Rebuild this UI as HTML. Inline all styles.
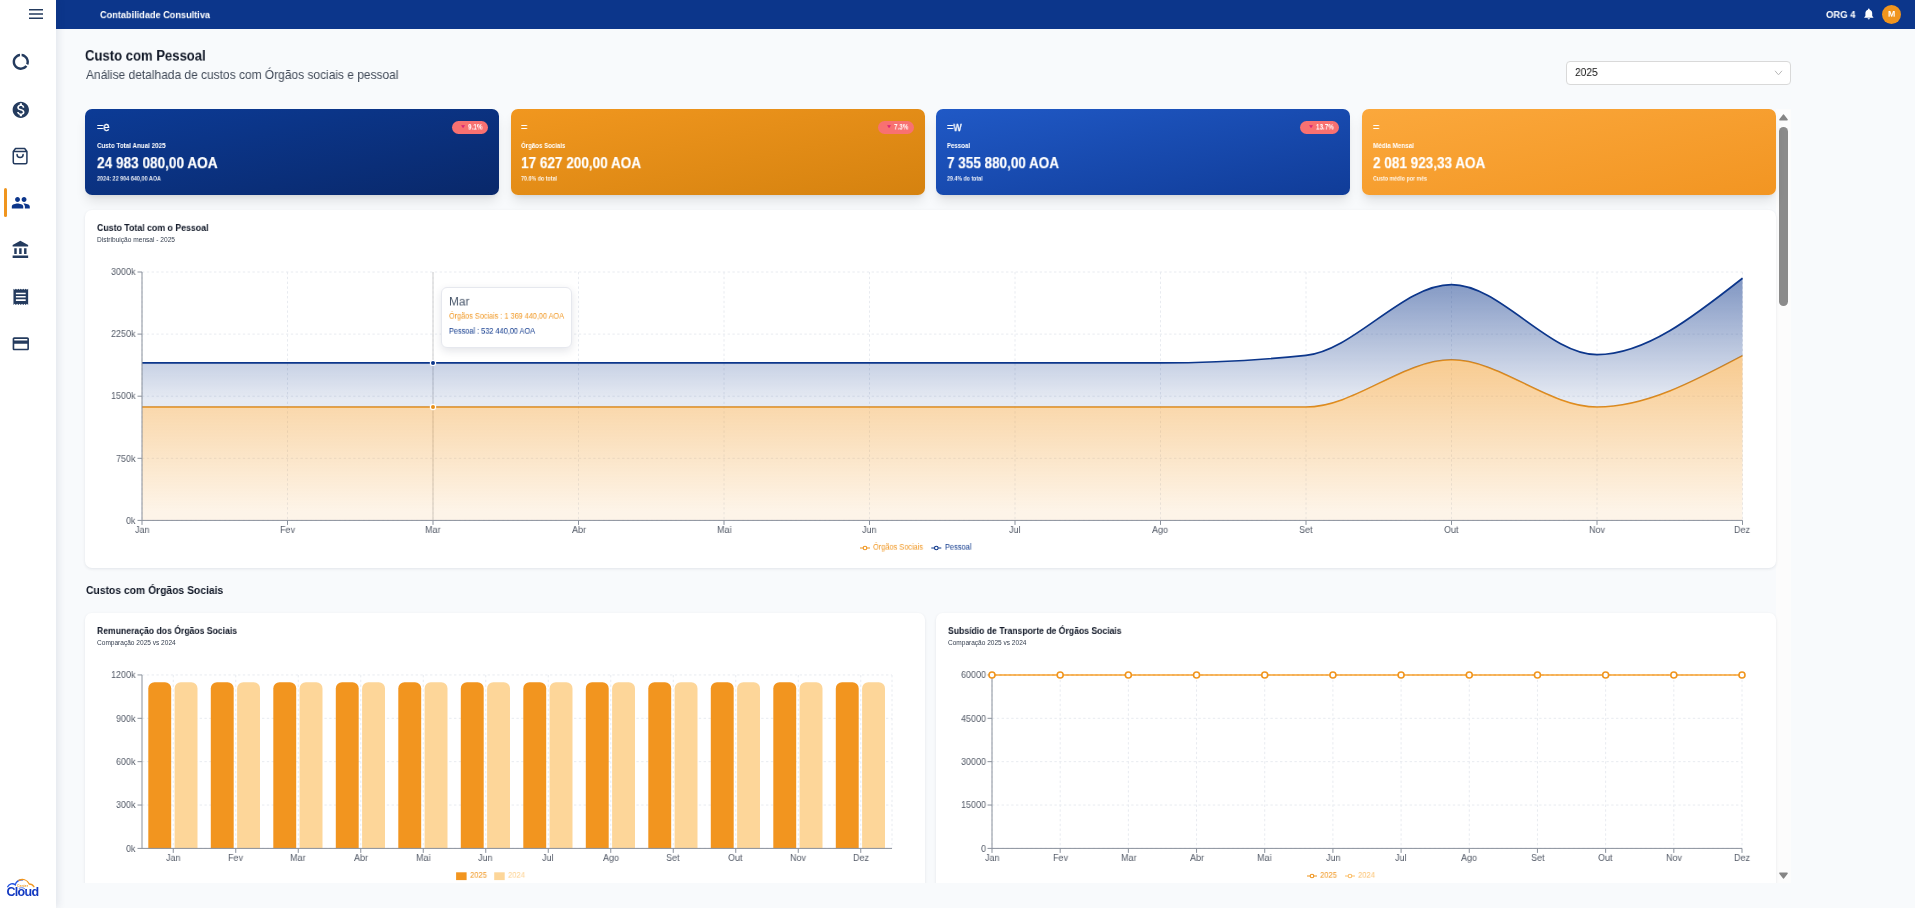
<!DOCTYPE html>
<html lang="pt"><head><meta charset="utf-8"><title>Custo com Pessoal</title>
<style>
*{box-sizing:border-box;margin:0;padding:0}
html,body{width:1915px;height:908px;overflow:hidden}
body{background:#f8fafc;font-family:"Liberation Sans",sans-serif;color:#1e293b;position:relative}
.abs{position:absolute}
.t{position:absolute;white-space:nowrap;line-height:1;transform-origin:0 0;will-change:transform}
#side{position:absolute;left:0;top:0;width:56px;height:908px;background:#fff;box-shadow:2px 0 8px rgba(30,41,80,.10);z-index:5}
#top{position:absolute;left:56px;top:0;width:1859px;height:28.700px;background:#0c368b;z-index:4}
.kpi{position:absolute;top:109px;height:86px;border-radius:7px;box-shadow:0 8px 12px -2.400px rgba(0,0,0,.1),0 3.200px 4.800px -3.200px rgba(0,0,0,.1);color:#fff}
.kpi .t{color:#fff}
.badge{position:absolute;top:12px;right:11px;height:12.800px;border-radius:7px;background:#f87171}
.badge i{position:absolute;left:9px;top:4px;width:0;height:0;border-left:1.900px solid transparent;border-right:1.900px solid transparent;border-top:3px solid #d61f7a}
.card{position:absolute;background:#fff;border-radius:7px;box-shadow:0 1px 3px rgba(30,40,70,.10)}
svg{position:absolute;left:0;top:0;overflow:visible}
svg text{font-family:"Liberation Sans",sans-serif}
</style></head><body>
<div id="top">
<div class="t" style="left:44.00px;top:11.00px;font-size:10px;font-weight:bold;color:#fff;transform:scale(0.9165,0.9000);">Contabilidade Consultiva</div>
<div class="t" style="left:1770.00px;top:10.70px;font-size:10px;font-weight:bold;color:#fff;transform:scale(0.9478,0.8750);">ORG 4</div>
<svg width="13.600" height="13.600" viewBox="0 0 24 24" style="left:1806.200px;top:7.300px"><path fill="#fff" d="M12 22c1.100 0 2-.900 2-2h-4c0 1.100.890 2 2 2zm6-6v-5c0-3.070-1.640-5.640-4.500-6.320V4c0-.830-.670-1.500-1.500-1.500s-1.500.670-1.500 1.500v.680C7.630 5.360 6 7.920 6 11v5l-2 2v1h16v-1l-2-2z"/></svg>
<div class="abs" style="left:1826px;top:4.500px;width:19.200px;height:19.200px;border-radius:50%;background:#f0951e"></div>
<div class="t" style="left:1831.90px;top:10.35px;font-size:8.4px;font-weight:bold;color:#fff;transform:scale(1.0452,0.9500);">M</div>
</div>
<div id="side">
<svg width="16" height="12" viewBox="0 0 16 12" style="left:28px;top:8px"><path d="M1 1.800h14M1 6h14M1 10.200h14" stroke="#243b5e" stroke-width="1.500" fill="none"/></svg>
<!-- donut -->
<svg width="19.6" height="19.6" viewBox="0 0 24 24" style="left:11.1px;top:51.8px"><path fill="#243b5e" d="M13 2.050v3.030c3.390.490 6 3.390 6 6.920 0 .900-.180 1.750-.480 2.540l2.600 1.530c.560-1.240.880-2.620.880-4.070 0-5.180-3.950-9.450-9-9.950zM12 19c-3.870 0-7-3.130-7-7 0-3.530 2.610-6.430 6-6.920V2.050c-5.060.500-9 4.760-9 9.950 0 5.520 4.470 10 9.990 10 3.310 0 6.240-1.610 8.060-4.090l-2.600-1.530C16.170 17.980 14.210 19 12 19z"/></svg>
<!-- money -->
<svg width="19.6" height="19.6" viewBox="0 0 24 24" style="left:11.1px;top:100.1px"><path fill="#243b5e" d="M12 2C6.480 2 2 6.480 2 12s4.480 10 10 10 10-4.480 10-10S17.520 2 12 2zm1.410 16.090V20h-2.670v-1.930c-1.710-.360-3.160-1.460-3.270-3.400h1.960c.100 1.050.820 1.870 2.650 1.870 1.960 0 2.400-.980 2.400-1.590 0-.830-.440-1.610-2.670-2.140-2.480-.600-4.180-1.620-4.180-3.670 0-1.720 1.390-2.840 3.110-3.210V4h2.670v1.950c1.860.450 2.790 1.860 2.850 3.390H14.300c-.050-1.110-.640-1.870-2.220-1.870-1.500 0-2.400.680-2.400 1.640 0 .840.650 1.390 2.670 1.910s4.180 1.390 4.180 3.910c-.010 1.830-1.380 2.830-3.120 3.160z"/></svg>
<!-- bag -->
<svg width="18.200" height="18.200" viewBox="0 0 24 24" style="left:10.900px;top:146.900px"><path d="M6 2 3 6v14a2 2 0 0 0 2 2h14a2 2 0 0 0 2-2V6l-3-4ZM3 6h18M16 10a4 4 0 0 1-8 0" fill="none" stroke="#243b5e" stroke-width="2" stroke-linecap="round" stroke-linejoin="round"/></svg>
<!-- active marker -->
<div class="abs" style="left:4px;top:188px;width:3px;height:29px;border-radius:2px;background:#f0951e"></div>
<!-- people -->
<svg width="19.6" height="19.6" viewBox="0 0 24 24" style="left:11.1px;top:193.1px"><path fill="#0c368b" d="M16 11c1.660 0 2.990-1.340 2.990-3S17.660 5 16 5c-1.660 0-3 1.340-3 3s1.340 3 3 3zm-8 0c1.660 0 2.990-1.340 2.990-3S9.660 5 8 5C6.340 5 5 6.340 5 8s1.340 3 3 3zm0 2c-2.330 0-7 1.170-7 3.500V19h14v-2.500c0-2.330-4.670-3.500-7-3.500zm8 0c-.290 0-.620.020-.970.050 1.160.840 1.970 1.970 1.970 3.450V19h6v-2.500c0-2.330-4.670-3.500-7-3.500z"/></svg>
<!-- bank -->
<svg width="19.6" height="19.6" viewBox="0 0 24 24" style="left:11.1px;top:240px"><path fill="#243b5e" d="M4 10v7h3v-7H4zm6 0v7h3v-7h-3zM2 22h19v-3H2v3zm14-12v7h3v-7h-3zm-4.500-9L2 6v2h19V6l-9.500-5z"/></svg>
<!-- receipt -->
<svg width="19.6" height="19.6" viewBox="0 0 24 24" style="left:11.1px;top:287.3px"><path fill="#243b5e" d="M18 17H6v-2h12v2zm0-4H6v-2h12v2zm0-4H6V7h12v2zM3 22l1.500-1.500L6 22l1.500-1.500L9 22l1.500-1.500L12 22l1.500-1.500L15 22l1.500-1.500L18 22l1.500-1.500L21 22V2l-1.500 1.500L18 2l-1.500 1.500L15 2l-1.500 1.500L12 2l-1.500 1.500L9 2 7.500 3.500 6 2 4.500 3.500 3 2v20z"/></svg>
<!-- card -->
<svg width="19.6" height="19.6" viewBox="0 0 24 24" style="left:11.1px;top:334px"><path fill="#243b5e" d="M20 4H4c-1.110 0-1.990.890-1.990 2L2 18c0 1.110.890 2 2 2h16c1.110 0 2-.890 2-2V6c0-1.110-.890-2-2-2zm0 14H4v-6h16v6zm0-10H4V6h16v2z"/></svg>
<!-- logo -->
<svg width="36" height="22" viewBox="0 0 36 22" style="left:5px;top:877px">
<path d="M2.700 9.700C4 7 8 5.600 10.200 7.900 11.200 4.600 14 2.800 17.500 2.900" fill="none" stroke="#2352e0" stroke-width="1.350" stroke-linecap="round"/>
<path d="M13.800 3.300C17.500 1.700 22 2.300 24.300 7 26 7 27.800 7.900 28.900 9.700" fill="none" stroke="#f0951e" stroke-width="1.350" stroke-linecap="round"/>
<text x="12" y="10.100" font-size="3.400" font-weight="bold" fill="#f0a030" textLength="11" lengthAdjust="spacingAndGlyphs">Center</text>
<text x="1.500" y="18.800" font-size="12.500" font-weight="bold" fill="#1238c0" letter-spacing="-.7">Cloud</text>
<path d="M14.200 11.300C17.500 9.600 21.900 11.200 21.700 16.800" fill="none" stroke="#3a63e0" stroke-width="1" stroke-linecap="round" opacity=".85"/>
</svg>
</div>
<div class="t" style="left:85.30px;top:48.91px;font-size:15.6px;font-weight:bold;color:#111827;transform:scale(0.8390,0.8917);">Custo com Pessoal</div>
<div class="t" style="left:85.50px;top:68.90px;font-size:12.8px;color:#414a58;transform:scale(0.9347,1.0000);">Análise detalhada de custos com Órgãos sociais e pessoal</div>
<div class="abs" style="left:1566px;top:61px;width:225px;height:24px;border:1px solid #d9d9d9;border-radius:4px;background:#fff"></div>
<svg width="9" height="6" viewBox="0 0 9 6" style="left:1774px;top:69.500px"><path d="M1 .800 4.500 4.800 8 .800" fill="none" stroke="#b8b8b8" stroke-width="1"/></svg>
<div class="t" style="left:1575.00px;top:67.40px;font-size:11.2px;color:#111;transform:scale(0.9080,1.0000);">2025</div>
<!-- scrollbar -->
<div class="abs" style="left:1776px;top:109px;width:15px;height:774px;background:#fcfcfc"></div>
<svg width="15" height="12" viewBox="0 0 15 12" style="left:1776px;top:110.800px"><path d="M4 8.800h7L7.500 4.200z" fill="#858585" stroke="#858585" stroke-width="1.600" stroke-linejoin="round"/></svg>
<div class="abs" style="left:1779px;top:126.700px;width:9px;height:179px;border-radius:4.500px;background:#8b8b8b"></div>
<svg width="15" height="12" viewBox="0 0 15 12" style="left:1776px;top:869.500px"><path d="M4 3.200h7L7.500 7.800z" fill="#858585" stroke="#858585" stroke-width="1.600" stroke-linejoin="round"/></svg>
<div class="kpi" style="left:85.0px;width:414px;background:linear-gradient(to bottom right,#0c3b96 0%,#09286a 100%)">
<div class="t" style="left:11.50px;top:11.70px;font-size:12px;-webkit-text-stroke:.3px #fff;transform:scale(0.9132,1.0000);">=e</div>
<div class="t" style="left:11.50px;top:33.20px;font-size:7.2px;font-weight:bold;transform:scale(0.8705,1.0000);">Custo Total Anual 2025</div>
<div class="t" style="left:11.50px;top:47.46px;font-size:16px;font-weight:bold;-webkit-text-stroke:.2px #fff;transform:scale(0.8502,0.9417);">24 983 080,00 AOA</div>
<div class="t" style="left:11.50px;top:67.10px;font-size:6.4px;font-weight:bold;opacity:.92;transform:scale(0.8564,0.9200);">2024: 22 904 640,00 AOA</div>
<div class="badge" style="width:35.7px"><svg width="4.100" height="3.300" viewBox="0 0 5 4" style="left:8.700px;top:4.200px"><path d="M.7.6h3.600L2.500 3.400z" fill="#d61f7a" stroke="#d61f7a" stroke-width=".6" stroke-linejoin="round"/></svg></div>
<div class="t" style="left:383.30px;top:14.07px;font-size:8.4px;font-weight:bold;transform:scale(0.7594,0.9333);">9.1%</div>
</div>
<div class="kpi" style="left:510.67px;width:414px;background:linear-gradient(to bottom right,#f1971f 0%,#d5820f 100%)">
<div class="t" style="left:10.60px;top:11.70px;font-size:12px;-webkit-text-stroke:.3px #fff;transform:scale(0.8980,1.0000);">=</div>
<div class="t" style="left:10.60px;top:33.20px;font-size:7.2px;font-weight:bold;transform:scale(0.8482,1.0000);">Órgãos Sociais</div>
<div class="t" style="left:10.60px;top:47.46px;font-size:16px;font-weight:bold;-webkit-text-stroke:.2px #fff;transform:scale(0.8467,0.9417);">17 627 200,00 AOA</div>
<div class="t" style="left:10.60px;top:67.10px;font-size:6.4px;font-weight:bold;opacity:.92;transform:scale(0.8378,0.9200);">70.6% do total</div>
<div class="badge" style="width:35.5px"><svg width="4.100" height="3.300" viewBox="0 0 5 4" style="left:8.700px;top:4.200px"><path d="M.7.6h3.600L2.500 3.400z" fill="#d61f7a" stroke="#d61f7a" stroke-width=".6" stroke-linejoin="round"/></svg></div>
<div class="t" style="left:383.50px;top:14.07px;font-size:8.4px;font-weight:bold;transform:scale(0.7489,0.9333);">7.3%</div>
</div>
<div class="kpi" style="left:936.33px;width:414px;background:linear-gradient(to bottom right,#2059c6 0%,#103c98 100%)">
<div class="t" style="left:10.60px;top:11.70px;font-size:12px;-webkit-text-stroke:.3px #fff;transform:scale(0.9243,1.0000);">=w</div>
<div class="t" style="left:10.60px;top:33.20px;font-size:7.2px;font-weight:bold;transform:scale(0.8465,1.0000);">Pessoal</div>
<div class="t" style="left:10.60px;top:47.46px;font-size:16px;font-weight:bold;-webkit-text-stroke:.2px #fff;transform:scale(0.8432,0.9417);">7 355 880,00 AOA</div>
<div class="t" style="left:10.60px;top:67.10px;font-size:6.4px;font-weight:bold;opacity:.92;transform:scale(0.8262,0.9200);">29.4% do total</div>
<div class="badge" style="width:39px"><svg width="4.100" height="3.300" viewBox="0 0 5 4" style="left:8.700px;top:4.200px"><path d="M.7.6h3.600L2.500 3.400z" fill="#d61f7a" stroke="#d61f7a" stroke-width=".6" stroke-linejoin="round"/></svg></div>
<div class="t" style="left:380.00px;top:14.07px;font-size:8.4px;font-weight:bold;transform:scale(0.7495,0.9333);">13.7%</div>
</div>
<div class="kpi" style="left:1362.0px;width:414px;background:linear-gradient(to bottom right,#fba83c 0%,#f29522 100%)">
<div class="t" style="left:10.60px;top:11.70px;font-size:12px;-webkit-text-stroke:.3px #fff;transform:scale(0.8980,1.0000);">=</div>
<div class="t" style="left:10.60px;top:33.20px;font-size:7.2px;font-weight:bold;transform:scale(0.8773,1.0000);">Média Mensal</div>
<div class="t" style="left:10.60px;top:47.46px;font-size:16px;font-weight:bold;-webkit-text-stroke:.2px #fff;transform:scale(0.8455,0.9417);">2 081 923,33 AOA</div>
<div class="t" style="left:10.60px;top:67.10px;font-size:6.4px;font-weight:bold;opacity:.92;transform:scale(0.8264,0.9200);">Custo médio por mês</div>
</div>
<div class="card" style="left:85px;top:209.500px;width:1691px;height:358.500px"></div>
<div class="t" style="left:96.50px;top:224.00px;font-size:10px;font-weight:bold;color:#111827;transform:scale(0.8775,0.8750);">Custo Total com o Pessoal</div>
<div class="t" style="left:96.50px;top:237.00px;font-size:6.4px;color:#374151;transform:scale(1.0308,1.0000);">Distribuição mensal - 2025</div>
<svg width="1915" height="908" viewBox="0 0 1915 908" style="pointer-events:none">
<defs>
<linearGradient id="go" x1="0" y1="0" x2="0" y2="1"><stop offset="5%" stop-color="#f0951e" stop-opacity=".48"/><stop offset="95%" stop-color="#f0951e" stop-opacity=".1"/></linearGradient>
<linearGradient id="gb" x1="0" y1="0" x2="0" y2="1"><stop offset="5%" stop-color="#0c368b" stop-opacity=".5"/><stop offset="95%" stop-color="#0c368b" stop-opacity=".1"/></linearGradient>
</defs>
<path d="M142.0,272.00H1742.5M142.0,334.10H1742.5M142.0,396.20H1742.5M142.0,458.30H1742.5M142.0,520.40H1742.5M142.00,272.0V520.4M287.50,272.0V520.4M433.00,272.0V520.4M578.50,272.0V520.4M724.00,272.0V520.4M869.50,272.0V520.4M1015.00,272.0V520.4M1160.50,272.0V520.4M1306.00,272.0V520.4M1451.50,272.0V520.4M1597.00,272.0V520.4M1742.50,272.0V520.4" stroke="#e8ebf0" stroke-width="1" stroke-dasharray="2.400 2.400" fill="none"/>
<path d="M433.00,272.0V520.4" stroke="#cfcfcf" stroke-width="1" fill="none"/>
<path d="M142.00,407.01C190.50,407.01,239.00,407.01,287.50,407.01C336.00,407.01,384.50,407.01,433.00,407.01C481.50,407.01,530.00,407.01,578.50,407.01C627.00,407.01,675.50,407.01,724.00,407.01C772.50,407.01,821.00,407.01,869.50,407.01C918.00,407.01,966.50,407.01,1015.00,407.01C1063.50,407.01,1112.00,407.01,1160.50,407.01C1209.00,407.01,1257.50,407.01,1306.00,407.01C1354.50,407.01,1403.00,359.77,1451.50,359.77C1500.00,359.77,1548.50,407.01,1597.00,407.01C1645.50,407.01,1694.00,381.32,1742.50,355.63L1742.50,520.40L142.00,520.40Z" fill="url(#go)"/>
<path d="M142.00,407.01C190.50,407.01,239.00,407.01,287.50,407.01C336.00,407.01,384.50,407.01,433.00,407.01C481.50,407.01,530.00,407.01,578.50,407.01C627.00,407.01,675.50,407.01,724.00,407.01C772.50,407.01,821.00,407.01,869.50,407.01C918.00,407.01,966.50,407.01,1015.00,407.01C1063.50,407.01,1112.00,407.01,1160.50,407.01C1209.00,407.01,1257.50,407.01,1306.00,407.01C1354.50,407.01,1403.00,359.77,1451.50,359.77C1500.00,359.77,1548.50,407.01,1597.00,407.01C1645.50,407.01,1694.00,381.32,1742.50,355.63" fill="none" stroke="#e8901a" stroke-width="1.600"/>
<path d="M142.00,362.92C190.50,362.92,239.00,362.92,287.50,362.92C336.00,362.92,384.50,362.92,433.00,362.92C481.50,362.92,530.00,362.92,578.50,362.92C627.00,362.92,675.50,362.92,724.00,362.92C772.50,362.92,821.00,362.92,869.50,362.92C918.00,362.92,966.50,362.92,1015.00,362.92C1063.50,362.92,1112.00,362.92,1160.50,362.92C1209.00,362.92,1257.50,360.41,1306.00,355.38C1354.50,350.35,1403.00,284.59,1451.50,284.59C1500.00,284.59,1548.50,354.63,1597.00,354.63C1645.50,354.63,1694.00,316.42,1742.50,278.21L1742.50,355.63C1694.00,381.32,1645.50,407.01,1597.00,407.01C1548.50,407.01,1500.00,359.77,1451.50,359.77C1403.00,359.77,1354.50,407.01,1306.00,407.01C1257.50,407.01,1209.00,407.01,1160.50,407.01C1112.00,407.01,1063.50,407.01,1015.00,407.01C966.50,407.01,918.00,407.01,869.50,407.01C821.00,407.01,772.50,407.01,724.00,407.01C675.50,407.01,627.00,407.01,578.50,407.01C530.00,407.01,481.50,407.01,433.00,407.01C384.50,407.01,336.00,407.01,287.50,407.01C239.00,407.01,190.50,407.01,142.00,407.01Z" fill="url(#gb)"/>
<path d="M142.00,362.92C190.50,362.92,239.00,362.92,287.50,362.92C336.00,362.92,384.50,362.92,433.00,362.92C481.50,362.92,530.00,362.92,578.50,362.92C627.00,362.92,675.50,362.92,724.00,362.92C772.50,362.92,821.00,362.92,869.50,362.92C918.00,362.92,966.50,362.92,1015.00,362.92C1063.50,362.92,1112.00,362.92,1160.50,362.92C1209.00,362.92,1257.50,360.41,1306.00,355.38C1354.50,350.35,1403.00,284.59,1451.50,284.59C1500.00,284.59,1548.50,354.63,1597.00,354.63C1645.50,354.63,1694.00,316.42,1742.50,278.21" fill="none" stroke="#0c368b" stroke-width="1.700"/>
<path d="M142.0,272.0V520.4M142.0,520.4H1742.5M137.5,272.00H142.0M137.5,334.10H142.0M137.5,396.20H142.0M137.5,458.30H142.0M137.5,520.40H142.0M142.00,520.4V524.9M287.50,520.4V524.9M433.00,520.4V524.9M578.50,520.4V524.9M724.00,520.4V524.9M869.50,520.4V524.9M1015.00,520.4V524.9M1160.50,520.4V524.9M1306.00,520.4V524.9M1451.50,520.4V524.9M1597.00,520.4V524.9M1742.50,520.4V524.9" stroke="#8a919c" stroke-width="1" fill="none"/>

<circle cx="433.00" cy="407.01" r="2.600" fill="#e8901a" stroke="#fff" stroke-width="1.200"/><circle cx="433.00" cy="362.92" r="2.600" fill="#0c368b" stroke="#fff" stroke-width="1.200"/>
<path d="M860,548h3.200M866.8,548h3.200" stroke="#f0951e" stroke-width="1.100" fill="none"/><circle cx="865" cy="548" r="1.800" fill="none" stroke="#f0951e" stroke-width="1.100"/><path d="M931.3,548h3.200M938.0999999999999,548h3.200" stroke="#0c368b" stroke-width="1.100" fill="none"/><circle cx="936.3" cy="548" r="1.800" fill="none" stroke="#0c368b" stroke-width="1.100"/></svg>
<div class="t" style="left:111.38px;top:268.20px;font-size:10px;color:#525966;transform:scale(0.9000,0.8625);">3000k</div>
<div class="t" style="left:111.38px;top:330.30px;font-size:10px;color:#525966;transform:scale(0.9000,0.8625);">2250k</div>
<div class="t" style="left:111.38px;top:392.40px;font-size:10px;color:#525966;transform:scale(0.9000,0.8625);">1500k</div>
<div class="t" style="left:116.38px;top:454.50px;font-size:10px;color:#525966;transform:scale(0.9000,0.8625);">750k</div>
<div class="t" style="left:126.39px;top:516.60px;font-size:10px;color:#525966;transform:scale(0.9000,0.8625);">0k</div>
<div class="t" style="left:134.74px;top:526.00px;font-size:10px;color:#525966;transform:scale(0.9000,0.8625);">Jan</div>
<div class="t" style="left:280.00px;top:526.00px;font-size:10px;color:#525966;transform:scale(0.9000,0.8625);">Fev</div>
<div class="t" style="left:425.24px;top:526.00px;font-size:10px;color:#525966;transform:scale(0.9000,0.8625);">Mar</div>
<div class="t" style="left:571.50px;top:526.00px;font-size:10px;color:#525966;transform:scale(0.9000,0.8625);">Abr</div>
<div class="t" style="left:716.74px;top:526.00px;font-size:10px;color:#525966;transform:scale(0.9000,0.8625);">Mai</div>
<div class="t" style="left:862.24px;top:526.00px;font-size:10px;color:#525966;transform:scale(0.9000,0.8625);">Jun</div>
<div class="t" style="left:1009.24px;top:526.00px;font-size:10px;color:#525966;transform:scale(0.9000,0.8625);">Jul</div>
<div class="t" style="left:1152.49px;top:526.00px;font-size:10px;color:#525966;transform:scale(0.9000,0.8625);">Ago</div>
<div class="t" style="left:1299.24px;top:526.00px;font-size:10px;color:#525966;transform:scale(0.9000,0.8625);">Set</div>
<div class="t" style="left:1444.24px;top:526.00px;font-size:10px;color:#525966;transform:scale(0.9000,0.8625);">Out</div>
<div class="t" style="left:1588.99px;top:526.00px;font-size:10px;color:#525966;transform:scale(0.9000,0.8625);">Nov</div>
<div class="t" style="left:1734.49px;top:526.00px;font-size:10px;color:#525966;transform:scale(0.9000,0.8625);">Dez</div>
<div class="t" style="left:873.40px;top:543.05px;font-size:8.4px;color:#f0951e;transform:scale(0.8821,0.9500);">Órgãos Sociais</div>
<div class="t" style="left:944.80px;top:543.05px;font-size:8.4px;color:#0c368b;transform:scale(0.8860,0.9500);">Pessoal</div>
<div class="abs" style="left:441px;top:287px;width:131px;height:60.500px;background:#fff;border:1px solid #e6e8ee;border-radius:6px;box-shadow:0 3px 8px rgba(30,40,70,.12)"></div>
<div class="t" style="left:449.00px;top:296.36px;font-size:12px;color:#475569;transform:scale(0.9820,0.9444);">Mar</div>
<div class="t" style="left:449.00px;top:312.35px;font-size:8.4px;color:#f0951e;transform:scale(0.8697,0.9500);">Órgãos Sociais : 1 369 440,00 AOA</div>
<div class="t" style="left:449.00px;top:327.35px;font-size:8.4px;color:#0c368b;transform:scale(0.8753,0.9500);">Pessoal : 532 440,00 AOA</div>
<div class="t" style="left:85.60px;top:584.80px;font-size:11.2px;font-weight:bold;color:#111827;transform:scale(0.9240,1.0000);">Custos com Órgãos Sociais</div>
<div class="abs" style="left:75px;top:600px;width:1705px;height:283px;overflow:hidden">
<div class="card" style="left:10px;top:13px;width:840px;height:300px"></div>
<div class="card" style="left:861px;top:13px;width:840px;height:300px"></div>
</div>
<div class="t" style="left:96.50px;top:626.80px;font-size:10px;font-weight:bold;color:#111827;transform:scale(0.8627,0.8750);">Remuneração dos Órgãos Sociais</div>
<div class="t" style="left:96.50px;top:639.80px;font-size:6.4px;color:#374151;transform:scale(1.0254,1.0000);">Comparação 2025 vs 2024</div>
<div class="t" style="left:947.50px;top:626.80px;font-size:10px;font-weight:bold;color:#111827;transform:scale(0.8629,0.8750);">Subsídio de Transporte de Órgãos Sociais</div>
<div class="t" style="left:947.50px;top:639.80px;font-size:6.4px;color:#374151;transform:scale(1.0215,1.0000);">Comparação 2025 vs 2024</div>
<svg width="1915" height="908" viewBox="0 0 1915 908" style="pointer-events:none">
<path d="M142.0,674.95H892.0M142.0,718.31H892.0M142.0,761.67H892.0M142.0,805.04H892.0M142.0,848.40H892.0M173.25,674.95V848.4M235.75,674.95V848.4M298.25,674.95V848.4M360.75,674.95V848.4M423.25,674.95V848.4M485.75,674.95V848.4M548.25,674.95V848.4M610.75,674.95V848.4M673.25,674.95V848.4M735.75,674.95V848.4M798.25,674.95V848.4M860.75,674.95V848.4M892.0,674.95V848.4" stroke="#e8ebf0" stroke-width="1" stroke-dasharray="2.400 2.400" fill="none"/>
<path d="M148.30,848.4V688.50A6.2,6.2,0,0,1,154.50,682.30H165.00A6.2,6.2,0,0,1,171.20,688.50V848.4Z" fill="#f2951f"/><path d="M174.60,848.4V688.50A6.2,6.2,0,0,1,180.80,682.30H191.30A6.2,6.2,0,0,1,197.50,688.50V848.4Z" fill="#fdd699"/><path d="M210.80,848.4V688.50A6.2,6.2,0,0,1,217.00,682.30H227.50A6.2,6.2,0,0,1,233.70,688.50V848.4Z" fill="#f2951f"/><path d="M237.10,848.4V688.50A6.2,6.2,0,0,1,243.30,682.30H253.80A6.2,6.2,0,0,1,260.00,688.50V848.4Z" fill="#fdd699"/><path d="M273.30,848.4V688.50A6.2,6.2,0,0,1,279.50,682.30H290.00A6.2,6.2,0,0,1,296.20,688.50V848.4Z" fill="#f2951f"/><path d="M299.60,848.4V688.50A6.2,6.2,0,0,1,305.80,682.30H316.30A6.2,6.2,0,0,1,322.50,688.50V848.4Z" fill="#fdd699"/><path d="M335.80,848.4V688.50A6.2,6.2,0,0,1,342.00,682.30H352.50A6.2,6.2,0,0,1,358.70,688.50V848.4Z" fill="#f2951f"/><path d="M362.10,848.4V688.50A6.2,6.2,0,0,1,368.30,682.30H378.80A6.2,6.2,0,0,1,385.00,688.50V848.4Z" fill="#fdd699"/><path d="M398.30,848.4V688.50A6.2,6.2,0,0,1,404.50,682.30H415.00A6.2,6.2,0,0,1,421.20,688.50V848.4Z" fill="#f2951f"/><path d="M424.60,848.4V688.50A6.2,6.2,0,0,1,430.80,682.30H441.30A6.2,6.2,0,0,1,447.50,688.50V848.4Z" fill="#fdd699"/><path d="M460.80,848.4V688.50A6.2,6.2,0,0,1,467.00,682.30H477.50A6.2,6.2,0,0,1,483.70,688.50V848.4Z" fill="#f2951f"/><path d="M487.10,848.4V688.50A6.2,6.2,0,0,1,493.30,682.30H503.80A6.2,6.2,0,0,1,510.00,688.50V848.4Z" fill="#fdd699"/><path d="M523.30,848.4V688.50A6.2,6.2,0,0,1,529.50,682.30H540.00A6.2,6.2,0,0,1,546.20,688.50V848.4Z" fill="#f2951f"/><path d="M549.60,848.4V688.50A6.2,6.2,0,0,1,555.80,682.30H566.30A6.2,6.2,0,0,1,572.50,688.50V848.4Z" fill="#fdd699"/><path d="M585.80,848.4V688.50A6.2,6.2,0,0,1,592.00,682.30H602.50A6.2,6.2,0,0,1,608.70,688.50V848.4Z" fill="#f2951f"/><path d="M612.10,848.4V688.50A6.2,6.2,0,0,1,618.30,682.30H628.80A6.2,6.2,0,0,1,635.00,688.50V848.4Z" fill="#fdd699"/><path d="M648.30,848.4V688.50A6.2,6.2,0,0,1,654.50,682.30H665.00A6.2,6.2,0,0,1,671.20,688.50V848.4Z" fill="#f2951f"/><path d="M674.60,848.4V688.50A6.2,6.2,0,0,1,680.80,682.30H691.30A6.2,6.2,0,0,1,697.50,688.50V848.4Z" fill="#fdd699"/><path d="M710.80,848.4V688.50A6.2,6.2,0,0,1,717.00,682.30H727.50A6.2,6.2,0,0,1,733.70,688.50V848.4Z" fill="#f2951f"/><path d="M737.10,848.4V688.50A6.2,6.2,0,0,1,743.30,682.30H753.80A6.2,6.2,0,0,1,760.00,688.50V848.4Z" fill="#fdd699"/><path d="M773.30,848.4V688.50A6.2,6.2,0,0,1,779.50,682.30H790.00A6.2,6.2,0,0,1,796.20,688.50V848.4Z" fill="#f2951f"/><path d="M799.60,848.4V688.50A6.2,6.2,0,0,1,805.80,682.30H816.30A6.2,6.2,0,0,1,822.50,688.50V848.4Z" fill="#fdd699"/><path d="M835.80,848.4V688.50A6.2,6.2,0,0,1,842.00,682.30H852.50A6.2,6.2,0,0,1,858.70,688.50V848.4Z" fill="#f2951f"/><path d="M862.10,848.4V688.50A6.2,6.2,0,0,1,868.30,682.30H878.80A6.2,6.2,0,0,1,885.00,688.50V848.4Z" fill="#fdd699"/>
<path d="M142.0,674.95V848.4M142.0,848.4H892.0M137.5,674.95H142.0M137.5,718.31H142.0M137.5,761.67H142.0M137.5,805.04H142.0M137.5,848.40H142.0M173.25,848.4V852.9M235.75,848.4V852.9M298.25,848.4V852.9M360.75,848.4V852.9M423.25,848.4V852.9M485.75,848.4V852.9M548.25,848.4V852.9M610.75,848.4V852.9M673.25,848.4V852.9M735.75,848.4V852.9M798.25,848.4V852.9M860.75,848.4V852.9" stroke="#8a919c" stroke-width="1" fill="none"/>

<rect x="456.100" y="872.300" width="10.500" height="7.800" fill="#f2951f"/><rect x="494.200" y="872.300" width="10.500" height="7.800" fill="#fdd699"/>
<path d="M992.0,674.95H1742.0M992.0,718.31H1742.0M992.0,761.67H1742.0M992.0,805.04H1742.0M992.0,848.40H1742.0M992.00,674.95V848.4M1060.18,674.95V848.4M1128.36,674.95V848.4M1196.55,674.95V848.4M1264.73,674.95V848.4M1332.91,674.95V848.4M1401.09,674.95V848.4M1469.27,674.95V848.4M1537.45,674.95V848.4M1605.64,674.95V848.4M1673.82,674.95V848.4M1742.00,674.95V848.4" stroke="#e8ebf0" stroke-width="1" stroke-dasharray="2.400 2.400" fill="none"/>
<path d="M992.0,674.95V848.4M992.0,848.4H1742.0M987.5,674.95H992.0M987.5,718.31H992.0M987.5,761.67H992.0M987.5,805.04H992.0M987.5,848.40H992.0M992.00,848.4V852.9M1060.18,848.4V852.9M1128.36,848.4V852.9M1196.55,848.4V852.9M1264.73,848.4V852.9M1332.91,848.4V852.9M1401.09,848.4V852.9M1469.27,848.4V852.9M1537.45,848.4V852.9M1605.64,848.4V852.9M1673.82,848.4V852.9M1742.00,848.4V852.9" stroke="#8a919c" stroke-width="1" fill="none"/>

<path d="M992.0,674.95H1742.0" stroke="#f0951e" stroke-width="1.600" fill="none"/><path d="M992.0,674.95H1742.0" stroke="#fbbf6a" stroke-width="1.600" stroke-dasharray="2.400 2.400" fill="none"/><circle cx="992.00" cy="674.95" r="3" fill="#fff" stroke="#f0951e" stroke-width="1.600"/><circle cx="1060.18" cy="674.95" r="3" fill="#fff" stroke="#f0951e" stroke-width="1.600"/><circle cx="1128.36" cy="674.95" r="3" fill="#fff" stroke="#f0951e" stroke-width="1.600"/><circle cx="1196.55" cy="674.95" r="3" fill="#fff" stroke="#f0951e" stroke-width="1.600"/><circle cx="1264.73" cy="674.95" r="3" fill="#fff" stroke="#f0951e" stroke-width="1.600"/><circle cx="1332.91" cy="674.95" r="3" fill="#fff" stroke="#f0951e" stroke-width="1.600"/><circle cx="1401.09" cy="674.95" r="3" fill="#fff" stroke="#f0951e" stroke-width="1.600"/><circle cx="1469.27" cy="674.95" r="3" fill="#fff" stroke="#f0951e" stroke-width="1.600"/><circle cx="1537.45" cy="674.95" r="3" fill="#fff" stroke="#f0951e" stroke-width="1.600"/><circle cx="1605.64" cy="674.95" r="3" fill="#fff" stroke="#f0951e" stroke-width="1.600"/><circle cx="1673.82" cy="674.95" r="3" fill="#fff" stroke="#f0951e" stroke-width="1.600"/><circle cx="1742.00" cy="674.95" r="3" fill="#fff" stroke="#f0951e" stroke-width="1.600"/>
<path d="M1307,876h3.200M1313.8,876h3.200" stroke="#f0951e" stroke-width="1.100" fill="none"/><circle cx="1312" cy="876" r="1.800" fill="none" stroke="#f0951e" stroke-width="1.100"/><path d="M1345,876h3.200M1351.8,876h3.200" stroke="#fbbf6a" stroke-width="1.100" fill="none"/><circle cx="1350" cy="876" r="1.800" fill="none" stroke="#fbbf6a" stroke-width="1.100"/></svg>
<div class="t" style="left:111.38px;top:671.15px;font-size:10px;color:#525966;transform:scale(0.9000,0.8625);">1200k</div>
<div class="t" style="left:116.38px;top:714.51px;font-size:10px;color:#525966;transform:scale(0.9000,0.8625);">900k</div>
<div class="t" style="left:116.38px;top:757.88px;font-size:10px;color:#525966;transform:scale(0.9000,0.8625);">600k</div>
<div class="t" style="left:116.38px;top:801.24px;font-size:10px;color:#525966;transform:scale(0.9000,0.8625);">300k</div>
<div class="t" style="left:126.39px;top:844.60px;font-size:10px;color:#525966;transform:scale(0.9000,0.8625);">0k</div>
<div class="t" style="left:165.99px;top:854.00px;font-size:10px;color:#525966;transform:scale(0.9000,0.8625);">Jan</div>
<div class="t" style="left:228.25px;top:854.00px;font-size:10px;color:#525966;transform:scale(0.9000,0.8625);">Fev</div>
<div class="t" style="left:290.49px;top:854.00px;font-size:10px;color:#525966;transform:scale(0.9000,0.8625);">Mar</div>
<div class="t" style="left:353.75px;top:854.00px;font-size:10px;color:#525966;transform:scale(0.9000,0.8625);">Abr</div>
<div class="t" style="left:415.99px;top:854.00px;font-size:10px;color:#525966;transform:scale(0.9000,0.8625);">Mai</div>
<div class="t" style="left:478.49px;top:854.00px;font-size:10px;color:#525966;transform:scale(0.9000,0.8625);">Jun</div>
<div class="t" style="left:542.49px;top:854.00px;font-size:10px;color:#525966;transform:scale(0.9000,0.8625);">Jul</div>
<div class="t" style="left:602.74px;top:854.00px;font-size:10px;color:#525966;transform:scale(0.9000,0.8625);">Ago</div>
<div class="t" style="left:666.49px;top:854.00px;font-size:10px;color:#525966;transform:scale(0.9000,0.8625);">Set</div>
<div class="t" style="left:728.49px;top:854.00px;font-size:10px;color:#525966;transform:scale(0.9000,0.8625);">Out</div>
<div class="t" style="left:790.24px;top:854.00px;font-size:10px;color:#525966;transform:scale(0.9000,0.8625);">Nov</div>
<div class="t" style="left:852.74px;top:854.00px;font-size:10px;color:#525966;transform:scale(0.9000,0.8625);">Dez</div>
<div class="t" style="left:960.87px;top:671.15px;font-size:10px;color:#525966;transform:scale(0.9000,0.8625);">60000</div>
<div class="t" style="left:960.87px;top:714.51px;font-size:10px;color:#525966;transform:scale(0.9000,0.8625);">45000</div>
<div class="t" style="left:960.87px;top:757.88px;font-size:10px;color:#525966;transform:scale(0.9000,0.8625);">30000</div>
<div class="t" style="left:960.87px;top:801.24px;font-size:10px;color:#525966;transform:scale(0.9000,0.8625);">15000</div>
<div class="t" style="left:980.89px;top:844.60px;font-size:10px;color:#525966;transform:scale(0.9000,0.8625);">0</div>
<div class="t" style="left:984.74px;top:854.00px;font-size:10px;color:#525966;transform:scale(0.9000,0.8625);">Jan</div>
<div class="t" style="left:1052.68px;top:854.00px;font-size:10px;color:#525966;transform:scale(0.9000,0.8625);">Fev</div>
<div class="t" style="left:1120.61px;top:854.00px;font-size:10px;color:#525966;transform:scale(0.9000,0.8625);">Mar</div>
<div class="t" style="left:1189.54px;top:854.00px;font-size:10px;color:#525966;transform:scale(0.9000,0.8625);">Abr</div>
<div class="t" style="left:1257.47px;top:854.00px;font-size:10px;color:#525966;transform:scale(0.9000,0.8625);">Mai</div>
<div class="t" style="left:1325.65px;top:854.00px;font-size:10px;color:#525966;transform:scale(0.9000,0.8625);">Jun</div>
<div class="t" style="left:1395.33px;top:854.00px;font-size:10px;color:#525966;transform:scale(0.9000,0.8625);">Jul</div>
<div class="t" style="left:1461.26px;top:854.00px;font-size:10px;color:#525966;transform:scale(0.9000,0.8625);">Ago</div>
<div class="t" style="left:1530.70px;top:854.00px;font-size:10px;color:#525966;transform:scale(0.9000,0.8625);">Set</div>
<div class="t" style="left:1598.38px;top:854.00px;font-size:10px;color:#525966;transform:scale(0.9000,0.8625);">Out</div>
<div class="t" style="left:1665.81px;top:854.00px;font-size:10px;color:#525966;transform:scale(0.9000,0.8625);">Nov</div>
<div class="t" style="left:1733.99px;top:854.00px;font-size:10px;color:#525966;transform:scale(0.9000,0.8625);">Dez</div>
<div class="t" style="left:469.90px;top:871.05px;font-size:8.4px;color:#f0951e;transform:scale(0.9066,0.9500);">2025</div>
<div class="t" style="left:507.60px;top:871.05px;font-size:8.4px;color:#fdd08c;transform:scale(0.9066,0.9500);">2024</div>
<div class="t" style="left:1320.40px;top:871.05px;font-size:8.4px;color:#f0951e;transform:scale(0.9066,0.9500);">2025</div>
<div class="t" style="left:1358.40px;top:871.05px;font-size:8.4px;color:#fbbf6a;transform:scale(0.9066,0.9500);">2024</div>
</body></html>
